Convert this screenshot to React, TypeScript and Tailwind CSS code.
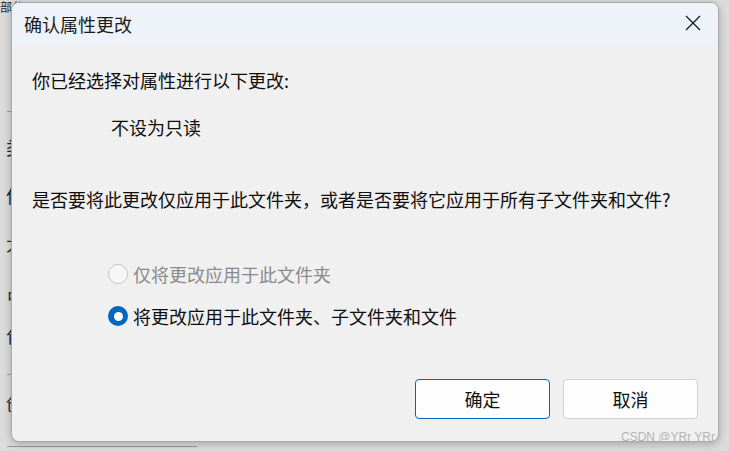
import React from "react";

const font = { fontFamily: '"Noto Sans CJK SC", "Noto Sans", sans-serif' };

function Radio({ checked, disabled }: { checked?: boolean; disabled?: boolean }) {
  if (checked) {
    return (
      <span className="flex h-[20px] w-[20px] items-center justify-center rounded-full bg-[#0067c0]">
        <span className="h-[9px] w-[9px] rounded-full bg-white" />
      </span>
    );
  }
  return (
    <span
      className={
        "h-[20px] w-[20px] rounded-full border " +
        (disabled ? "border-[#c6c6c6] bg-[#f7f7f7]" : "border-[#8a8a8a] bg-white")
      }
    />
  );
}

export default function App() {
  return (
    <div className="relative h-[451px] w-[729px] overflow-hidden bg-[#dcdcdc]" style={font}>
      {/* background window fragments */}
      <div className="absolute left-0 top-0 h-full w-full text-[18px] text-[#222]">
        <div className="absolute left-0 top-0 text-[12px] leading-[14px]">部分</div>
        <div className="absolute left-[6px] top-[134px]">类</div>
        <div className="absolute left-[6px] top-[182px]">位</div>
        <div className="absolute left-[6px] top-[230px]">大</div>
        <div className="absolute left-[6px] top-[278px]">占</div>
        <div className="absolute left-[6px] top-[323px]">包</div>
        <div className="absolute left-[6px] top-[390px]">创</div>
        <div className="absolute left-[7px] top-[111px] h-px w-[6px] bg-[#999]" />
        <div className="absolute left-[7px] top-[374px] h-px w-[6px] bg-[#999]" />
        <div className="absolute left-[7px] top-[446px] h-px w-[190px] bg-[#999]" />
      </div>

      {/* dialog */}
      <div className="absolute left-[11px] top-[2px] flex h-[440px] w-[708px] flex-col overflow-hidden rounded-[8px] border border-[#a8a8a8] bg-[#f0f0f0] shadow-[0_2px_8px_rgba(0,0,0,0.25)]">
        <div className="flex h-[42px] shrink-0 items-center justify-between bg-[#eef2f9] pl-[12px] pr-[17px]">
          <span className="text-[18px] leading-[24px] text-[#1a1a1a]">确认属性更改</span>
          <svg width="16" height="16" viewBox="0 0 16 16" className="mb-[2px]">
            <path d="M1 1 L15 15 M15 1 L1 15" stroke="#1a1a1a" strokeWidth="1.3" fill="none" />
          </svg>
        </div>

        <div className="flex flex-1 flex-col pl-[20px] pr-[20px] text-[18px] leading-[24px] text-[#0d0d0d]">
          <div className="mt-[23px]">你已经选择对属性进行以下更改:</div>
          <div className="mt-[23px] pl-[79px]">不设为只读</div>
          <div className="mt-[48px]">是否要将此更改仅应用于此文件夹，或者是否要将它应用于所有子文件夹和文件?</div>

          <div className="mt-[51px] flex items-center gap-[5px] pl-[76px] text-[#8a8a8a]">
            <Radio disabled />
            <span>仅将更改应用于此文件夹</span>
          </div>
          <div className="mt-[18px] flex items-center gap-[5px] pl-[76px]">
            <Radio checked />
            <span>将更改应用于此文件夹、子文件夹和文件</span>
          </div>

          <div className="mt-[51px] flex justify-end gap-[13px]">
            <button className="flex h-[40px] w-[135px] items-center justify-center rounded-[4px] border border-[#0067c0] bg-[#fdfdfd] text-[18px] text-[#111]">
              确定
            </button>
            <button className="flex h-[40px] w-[135px] items-center justify-center rounded-[4px] border border-[#d0d0d0] bg-[#fdfdfd] text-[18px] text-[#111]">
              取消
            </button>
          </div>
        </div>
      </div>

      <div
        className="absolute right-[14px] top-[430px] text-[12px] leading-[14px] text-[#b4b4b4]"
        style={{ fontFamily: '"Liberation Sans", "Noto Sans", sans-serif' }}
      >
        CSDN @YRr YRr
      </div>
    </div>
  );
}
